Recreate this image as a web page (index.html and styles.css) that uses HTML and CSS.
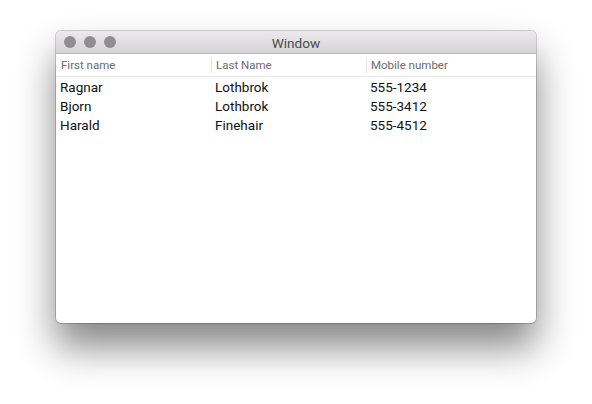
FILE: index.html
```html
<!DOCTYPE html>
<html>
<head>
<meta charset="utf-8">
<link rel="stylesheet" href="styles.css">
</head>
<body>
<div class="stage">
  <div class="window">
    <div class="titlebar">
      <div class="lights">
        <span class="light"></span><span class="light"></span><span class="light"></span>
      </div>
      <div class="title">Window</div>
    </div>
    <div class="table">
      <div class="head">
        <div class="hcell">First name</div>
        <div class="hcell sep">Last Name</div>
        <div class="hcell sep">Mobile number</div>
      </div>
      <div class="body">
        <div class="row"><div class="cell">Ragnar</div><div class="cell">Lothbrok</div><div class="cell">555-1234</div></div>
        <div class="row"><div class="cell">Bjorn</div><div class="cell">Lothbrok</div><div class="cell">555-3412</div></div>
        <div class="row"><div class="cell">Harald</div><div class="cell">Finehair</div><div class="cell">555-4512</div></div>
      </div>
    </div>
  </div>
</div>
</body>
</html>
```
FILE: styles.css
```css
html, body { margin: 0; padding: 0; background: #fff; }
.stage {
  width: 592px; height: 404px; box-sizing: border-box;
  padding: 31px 56px 0 56px;
  font-family: Roboto, "Liberation Sans", sans-serif;
}
.window {
  width: 480px; height: 292px;
  background: #fff;
  border-radius: 5px;
  box-shadow: 0 0 0 1px rgba(0,0,0,0.18), 0 24px 38px rgba(0,0,0,0.48);
  display: flex; flex-direction: column;
  overflow: hidden;
}
.titlebar {
  height: 22px; flex: none;
  background: linear-gradient(#ebe9eb, #d5d3d5);
  border-bottom: 1px solid #b9b9b9;
  display: flex; align-items: center;
  position: relative;
}
.lights { display: flex; gap: 8px; padding-left: 8px; }
.light { width: 12px; height: 12px; border-radius: 50%; background: #8e8d91; }
.title {
  position: absolute; left: 0; right: 0; top: 1px; bottom: 0;
  display: flex; align-items: center; justify-content: center;
  font-size: 13.6px; color: #4a4a4a;
}
.table { flex: 1; display: flex; flex-direction: column; }
.head {
  display: grid; grid-template-columns: 155px 155px 1fr;
  height: 22px; border-bottom: 1px solid #e8e8e8;
  align-items: center;
}
.hcell { font-size: 11.5px; color: #6b6b6b; padding-left: 5px; height: 16px; line-height: 16px; }
.hcell.sep { border-left: 1px solid #e2e2e2; padding-left: 4px; }
.body { padding-top: 0; }
.row { display: grid; grid-template-columns: 155px 155px 1fr; height: 19px; align-items: center; }
.cell { font-size: 13.5px; color: #111; padding-left: 4px; }
```
